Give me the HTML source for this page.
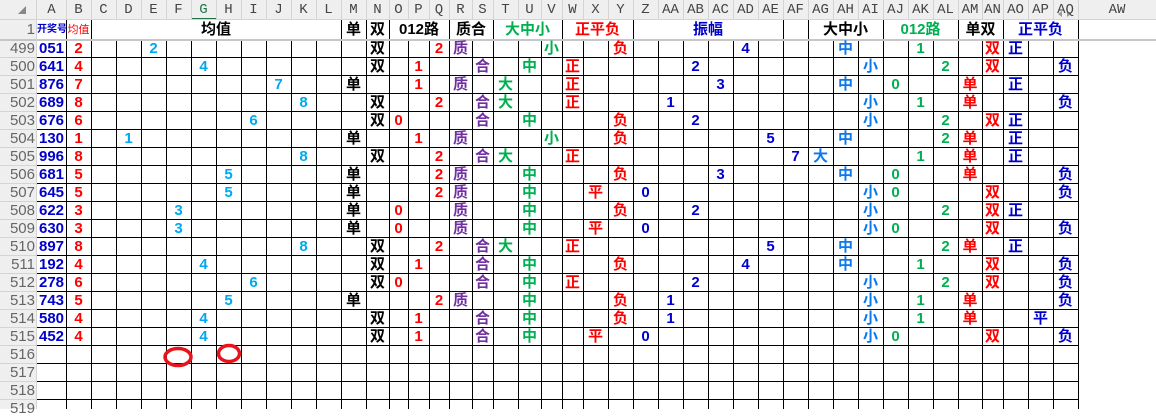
<!DOCTYPE html>
<html><head><meta charset="utf-8"><style>
*{margin:0;padding:0}
body{width:1156px;height:409px;overflow:hidden;background:#fff;position:relative;font-family:"Liberation Sans","Noto Sans CJK SC",sans-serif}
i{position:absolute;font-style:normal;text-align:center;height:17px;line-height:17px;font-size:15px;font-weight:bold;white-space:nowrap}
.h{top:0;height:20px;line-height:20px;font-weight:normal;font-size:14px;color:#444;font-family:"Liberation Mono","Noto Sans CJK SC",monospace}
.rn{left:0;width:35px;font-weight:normal;font-size:15px;color:#666;text-align:right;padding-right:2px}
.A{left:37px;width:29px}.B{left:66px;width:25px}.C{left:91px;width:25px}.D{left:116px;width:25px}.E{left:141px;width:25px}.F{left:166px;width:25px}.G{left:191px;width:25px}.H{left:216px;width:25px}.I{left:241px;width:25px}.J{left:266px;width:25px}.K{left:291px;width:25px}.L{left:316px;width:25px}.M{left:341px;width:25px}.N{left:366px;width:23px}.O{left:389px;width:19px}.P{left:408px;width:21px}.Q{left:429px;width:20px}.R{left:449px;width:23px}.S{left:472px;width:21px}.T{left:493px;width:25px}.U{left:518px;width:23px}.V{left:541px;width:21px}.W{left:562px;width:21px}.X{left:583px;width:25px}.Y{left:608px;width:25px}.Z{left:633px;width:25px}.AA{left:658px;width:25px}.AB{left:683px;width:25px}.AC{left:708px;width:25px}.AD{left:733px;width:25px}.AE{left:758px;width:25px}.AF{left:783px;width:25px}.AG{left:808px;width:25px}.AH{left:833px;width:25px}.AI{left:858px;width:25px}.AJ{left:883px;width:25px}.AK{left:908px;width:25px}.AL{left:933px;width:25px}.AM{left:958px;width:24px}.AN{left:982px;width:21px}.AO{left:1003px;width:25px}.AP{left:1028px;width:25px}.AQ{left:1053px;width:25px}.AW{left:1078px;width:78px}
.r0{top:40px}.r1{top:58px}.r2{top:76px}.r3{top:94px}.r4{top:112px}.r5{top:130px}.r6{top:148px}.r7{top:166px}.r8{top:184px}.r9{top:202px}.r10{top:220px}.r11{top:238px}.r12{top:256px}.r13{top:274px}.r14{top:292px}.r15{top:310px}.r16{top:328px}.r17{top:346px}.r18{top:364px}.r19{top:382px}.r20{top:400px}
.a{color:#0000cc}.b{color:#f00}.c{color:#00a8f0}.k{color:#000}.p{color:#7030a0}.g{color:#00b050}.d{color:#0000cc}.l{color:#0a78f0}
.t{top:21px;height:18px;line-height:18px}
</style></head><body>
<div style="position:absolute;left:0;top:0;width:1156px;height:20px;background:#efefef"></div>
<div style="position:absolute;left:0;top:20px;width:37px;height:389px;background:#efefef"></div>
<div style="position:absolute;left:0;top:39px;width:1156px;height:2px;background:#c6c6c6"></div>
<div style="position:absolute;left:191px;top:18px;width:25px;height:2px;background:#217346"></div>
<svg style="position:absolute;left:0;top:0" width="1156" height="409">
<g stroke="#d4d4d4" stroke-width="1">
<path d="M0 19.5H1156M36.5 0V409M66.5 0V20M91.5 0V20M116.5 0V20M141.5 0V20M166.5 0V20M191.5 0V20M216.5 0V20M241.5 0V20M266.5 0V20M291.5 0V20M316.5 0V20M341.5 0V20M366.5 0V20M389.5 0V20M408.5 0V20M429.5 0V20M449.5 0V20M472.5 0V20M493.5 0V20M518.5 0V20M541.5 0V20M562.5 0V20M583.5 0V20M608.5 0V20M633.5 0V20M658.5 0V20M683.5 0V20M708.5 0V20M733.5 0V20M758.5 0V20M783.5 0V20M808.5 0V20M833.5 0V20M858.5 0V20M883.5 0V20M908.5 0V20M933.5 0V20M958.5 0V20M982.5 0V20M1003.5 0V20M1028.5 0V20M1053.5 0V20M1078.5 0V20"/>
<path d="M0 57.5H36M0 75.5H36M0 93.5H36M0 111.5H36M0 129.5H36M0 147.5H36M0 165.5H36M0 183.5H36M0 201.5H36M0 219.5H36M0 237.5H36M0 255.5H36M0 273.5H36M0 291.5H36M0 309.5H36M0 327.5H36M0 345.5H36M0 363.5H36M0 381.5H36M0 399.5H36"/>
</g>
<g stroke="#000" stroke-width="1">
<path d="M66.5 20V39M91.5 20V39M341.5 20V39M366.5 20V39M389.5 20V39M449.5 20V39M493.5 20V39M562.5 20V39M633.5 20V39M783.5 20V39M808.5 20V39M883.5 20V39M958.5 20V39M1003.5 20V39M1078.5 20V39"/>
<path d="M66.5 41V409M91.5 41V409M116.5 41V409M141.5 41V409M166.5 41V409M191.5 41V409M216.5 41V409M241.5 41V409M266.5 41V409M291.5 41V409M316.5 41V409M341.5 41V409M366.5 41V409M389.5 41V409M408.5 41V409M429.5 41V409M449.5 41V409M472.5 41V409M493.5 41V409M518.5 41V409M541.5 41V409M562.5 41V409M583.5 41V409M608.5 41V409M633.5 41V409M658.5 41V409M683.5 41V409M708.5 41V409M733.5 41V409M758.5 41V409M783.5 41V409M808.5 41V409M833.5 41V409M858.5 41V409M883.5 41V409M908.5 41V409M933.5 41V409M958.5 41V409M982.5 41V409M1003.5 41V409M1028.5 41V409M1053.5 41V409M1078.5 41V409"/>
<path d="M37 57.5H1079M37 75.5H1079M37 93.5H1079M37 111.5H1079M37 129.5H1079M37 147.5H1079M37 165.5H1079M37 183.5H1079M37 201.5H1079M37 219.5H1079M37 237.5H1079M37 255.5H1079M37 273.5H1079M37 291.5H1079M37 309.5H1079M37 327.5H1079M37 345.5H1079M37 363.5H1079M37 381.5H1079M37 399.5H1079"/>
</g>
<path d="M18 14L26 6V14Z" fill="#888"/>
<path d="M1062 17L1058 14L1062 11ZM1067 11L1071 14L1067 17Z" fill="#999"/>
<ellipse cx="178" cy="357" rx="13" ry="8.5" fill="none" stroke="#e8141c" stroke-width="3.5"/>
<ellipse cx="229" cy="353.5" rx="10.5" ry="8" fill="none" stroke="#e8141c" stroke-width="3.5"/>
</svg>
<i class="h A">A</i><i class="h B">B</i><i class="h C">C</i><i class="h D">D</i><i class="h E">E</i><i class="h F">F</i><i class="h G" style="color:#217346">G</i><i class="h H">H</i><i class="h I">I</i><i class="h J">J</i><i class="h K">K</i><i class="h L">L</i><i class="h M">M</i><i class="h N">N</i><i class="h O">O</i><i class="h P">P</i><i class="h Q">Q</i><i class="h R">R</i><i class="h S">S</i><i class="h T">T</i><i class="h U">U</i><i class="h V">V</i><i class="h W">W</i><i class="h X">X</i><i class="h Y">Y</i><i class="h Z">Z</i><i class="h AA">AA</i><i class="h AB">AB</i><i class="h AC">AC</i><i class="h AD">AD</i><i class="h AE">AE</i><i class="h AF">AF</i><i class="h AG">AG</i><i class="h AH">AH</i><i class="h AI">AI</i><i class="h AJ">AJ</i><i class="h AK">AK</i><i class="h AL">AL</i><i class="h AM">AM</i><i class="h AN">AN</i><i class="h AO">AO</i><i class="h AP">AP</i><i class="h AQ">AQ</i><i class="h AW">AW</i>
<i class="rn t">1</i>
<i class="A t a" style="font-size:10px">开奖号</i><i class="B t b" style="font-size:11px;font-weight:normal">均值</i>
<i class="t k" style="left:91px;width:250px">均值</i>
<i class="M t k">单</i><i class="N t k">双</i>
<i class="t k" style="left:389px;width:60px">012路</i>
<i class="t k" style="left:449px;width:44px">质合</i>
<i class="t g" style="left:493px;width:69px">大中小</i>
<i class="t b" style="left:562px;width:71px">正平负</i>
<i class="t d" style="left:633px;width:150px">振幅</i>
<i class="t k" style="left:808px;width:75px">大中小</i>
<i class="t g" style="left:883px;width:75px">012路</i>
<i class="t k" style="left:958px;width:45px">单双</i>
<i class="t d" style="left:1003px;width:75px">正平负</i>
<i class="rn r0">499</i><i class="rn r1">500</i><i class="rn r2">501</i><i class="rn r3">502</i><i class="rn r4">503</i><i class="rn r5">504</i><i class="rn r6">505</i><i class="rn r7">506</i><i class="rn r8">507</i><i class="rn r9">508</i><i class="rn r10">509</i><i class="rn r11">510</i><i class="rn r12">511</i><i class="rn r13">512</i><i class="rn r14">513</i><i class="rn r15">514</i><i class="rn r16">515</i><i class="rn r17">516</i><i class="rn r18">517</i><i class="rn r19">518</i><i class="rn r20">519</i>

<i class="A r0 a">051</i><i class="B r0 b">2</i><i class="E r0 c">2</i><i class="N r0 k">双</i><i class="Q r0 b">2</i><i class="R r0 p">质</i><i class="V r0 g">小</i><i class="Y r0 b">负</i><i class="AD r0 d">4</i><i class="AH r0 l">中</i><i class="AK r0 g">1</i><i class="AN r0 b">双</i><i class="AO r0 d">正</i>
<i class="A r1 a">641</i><i class="B r1 b">4</i><i class="G r1 c">4</i><i class="N r1 k">双</i><i class="P r1 b">1</i><i class="S r1 p">合</i><i class="U r1 g">中</i><i class="W r1 b">正</i><i class="AB r1 d">2</i><i class="AI r1 l">小</i><i class="AL r1 g">2</i><i class="AN r1 b">双</i><i class="AQ r1 d">负</i>
<i class="A r2 a">876</i><i class="B r2 b">7</i><i class="J r2 c">7</i><i class="M r2 k">单</i><i class="P r2 b">1</i><i class="R r2 p">质</i><i class="T r2 g">大</i><i class="W r2 b">正</i><i class="AC r2 d">3</i><i class="AH r2 l">中</i><i class="AJ r2 g">0</i><i class="AM r2 b">单</i><i class="AO r2 d">正</i>
<i class="A r3 a">689</i><i class="B r3 b">8</i><i class="K r3 c">8</i><i class="N r3 k">双</i><i class="Q r3 b">2</i><i class="S r3 p">合</i><i class="T r3 g">大</i><i class="W r3 b">正</i><i class="AA r3 d">1</i><i class="AI r3 l">小</i><i class="AK r3 g">1</i><i class="AM r3 b">单</i><i class="AQ r3 d">负</i>
<i class="A r4 a">676</i><i class="B r4 b">6</i><i class="I r4 c">6</i><i class="N r4 k">双</i><i class="O r4 b">0</i><i class="S r4 p">合</i><i class="U r4 g">中</i><i class="Y r4 b">负</i><i class="AB r4 d">2</i><i class="AI r4 l">小</i><i class="AL r4 g">2</i><i class="AN r4 b">双</i><i class="AO r4 d">正</i>
<i class="A r5 a">130</i><i class="B r5 b">1</i><i class="D r5 c">1</i><i class="M r5 k">单</i><i class="P r5 b">1</i><i class="R r5 p">质</i><i class="V r5 g">小</i><i class="Y r5 b">负</i><i class="AE r5 d">5</i><i class="AH r5 l">中</i><i class="AL r5 g">2</i><i class="AM r5 b">单</i><i class="AO r5 d">正</i>
<i class="A r6 a">996</i><i class="B r6 b">8</i><i class="K r6 c">8</i><i class="N r6 k">双</i><i class="Q r6 b">2</i><i class="S r6 p">合</i><i class="T r6 g">大</i><i class="W r6 b">正</i><i class="AF r6 d">7</i><i class="AG r6 l">大</i><i class="AK r6 g">1</i><i class="AM r6 b">单</i><i class="AO r6 d">正</i>
<i class="A r7 a">681</i><i class="B r7 b">5</i><i class="H r7 c">5</i><i class="M r7 k">单</i><i class="Q r7 b">2</i><i class="R r7 p">质</i><i class="U r7 g">中</i><i class="Y r7 b">负</i><i class="AC r7 d">3</i><i class="AH r7 l">中</i><i class="AJ r7 g">0</i><i class="AM r7 b">单</i><i class="AQ r7 d">负</i>
<i class="A r8 a">645</i><i class="B r8 b">5</i><i class="H r8 c">5</i><i class="M r8 k">单</i><i class="Q r8 b">2</i><i class="R r8 p">质</i><i class="U r8 g">中</i><i class="X r8 b">平</i><i class="Z r8 d">0</i><i class="AI r8 l">小</i><i class="AJ r8 g">0</i><i class="AN r8 b">双</i><i class="AQ r8 d">负</i>
<i class="A r9 a">622</i><i class="B r9 b">3</i><i class="F r9 c">3</i><i class="M r9 k">单</i><i class="O r9 b">0</i><i class="R r9 p">质</i><i class="U r9 g">中</i><i class="Y r9 b">负</i><i class="AB r9 d">2</i><i class="AI r9 l">小</i><i class="AL r9 g">2</i><i class="AN r9 b">双</i><i class="AO r9 d">正</i>
<i class="A r10 a">630</i><i class="B r10 b">3</i><i class="F r10 c">3</i><i class="M r10 k">单</i><i class="O r10 b">0</i><i class="R r10 p">质</i><i class="U r10 g">中</i><i class="X r10 b">平</i><i class="Z r10 d">0</i><i class="AI r10 l">小</i><i class="AJ r10 g">0</i><i class="AN r10 b">双</i><i class="AQ r10 d">负</i>
<i class="A r11 a">897</i><i class="B r11 b">8</i><i class="K r11 c">8</i><i class="N r11 k">双</i><i class="Q r11 b">2</i><i class="S r11 p">合</i><i class="T r11 g">大</i><i class="W r11 b">正</i><i class="AE r11 d">5</i><i class="AH r11 l">中</i><i class="AL r11 g">2</i><i class="AM r11 b">单</i><i class="AO r11 d">正</i>
<i class="A r12 a">192</i><i class="B r12 b">4</i><i class="G r12 c">4</i><i class="N r12 k">双</i><i class="P r12 b">1</i><i class="S r12 p">合</i><i class="U r12 g">中</i><i class="Y r12 b">负</i><i class="AD r12 d">4</i><i class="AH r12 l">中</i><i class="AK r12 g">1</i><i class="AN r12 b">双</i><i class="AQ r12 d">负</i>
<i class="A r13 a">278</i><i class="B r13 b">6</i><i class="I r13 c">6</i><i class="N r13 k">双</i><i class="O r13 b">0</i><i class="S r13 p">合</i><i class="U r13 g">中</i><i class="W r13 b">正</i><i class="AB r13 d">2</i><i class="AI r13 l">小</i><i class="AL r13 g">2</i><i class="AN r13 b">双</i><i class="AQ r13 d">负</i>
<i class="A r14 a">743</i><i class="B r14 b">5</i><i class="H r14 c">5</i><i class="M r14 k">单</i><i class="Q r14 b">2</i><i class="R r14 p">质</i><i class="U r14 g">中</i><i class="Y r14 b">负</i><i class="AA r14 d">1</i><i class="AI r14 l">小</i><i class="AK r14 g">1</i><i class="AM r14 b">单</i><i class="AQ r14 d">负</i>
<i class="A r15 a">580</i><i class="B r15 b">4</i><i class="G r15 c">4</i><i class="N r15 k">双</i><i class="P r15 b">1</i><i class="S r15 p">合</i><i class="U r15 g">中</i><i class="Y r15 b">负</i><i class="AA r15 d">1</i><i class="AI r15 l">小</i><i class="AK r15 g">1</i><i class="AM r15 b">单</i><i class="AP r15 d">平</i>
<i class="A r16 a">452</i><i class="B r16 b">4</i><i class="G r16 c">4</i><i class="N r16 k">双</i><i class="P r16 b">1</i><i class="S r16 p">合</i><i class="U r16 g">中</i><i class="X r16 b">平</i><i class="Z r16 d">0</i><i class="AI r16 l">小</i><i class="AJ r16 g">0</i><i class="AN r16 b">双</i><i class="AQ r16 d">负</i>
</body></html>
